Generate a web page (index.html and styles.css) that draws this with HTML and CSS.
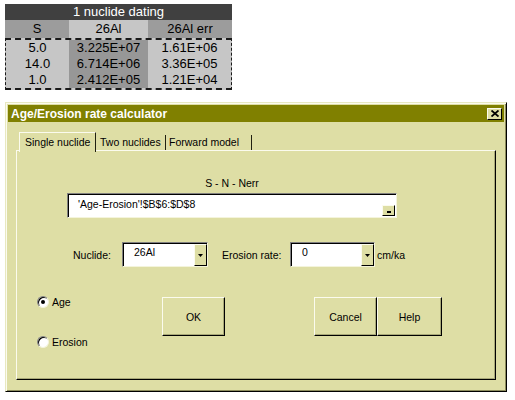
FILE: index.html
```html
<!DOCTYPE html>
<html>
<head>
<meta charset="utf-8">
<link rel="stylesheet" href="styles.css">
</head>
<body>
<div class="sheet">
  <div class="sheet-title">1 nuclide dating</div>
  <div class="sheet-row sheet-head">
    <div class="cell dark">S</div>
    <div class="cell light">26Al</div>
    <div class="cell dark">26Al err</div>
  </div>
  <div class="sheet-body">
    <div class="sheet-row"><div class="cell light">5.0</div><div class="cell mid">3.225E+07</div><div class="cell light">1.61E+06</div></div>
    <div class="sheet-row"><div class="cell light">14.0</div><div class="cell mid">6.714E+06</div><div class="cell light">3.36E+05</div></div>
    <div class="sheet-row"><div class="cell light">1.0</div><div class="cell mid">2.412E+05</div><div class="cell light">1.21E+04</div></div>
  </div>
</div>

<div class="dialog">
  <div class="titlebar">
    <span class="title">Age/Erosion rate calculator</span>
    <span class="close"><svg width="8" height="7" viewBox="0 0 8 7"><path d="M0.5 0.5 L7.5 6.5 M7.5 0.5 L0.5 6.5" stroke="#000" stroke-width="1.8"/></svg></span>
  </div>
  <div class="tabs">
    <div class="tab tab-active">Single nuclide</div>
    <div class="tab tab-two">Two nuclides</div>
    <div class="tab tab-fwd">Forward model</div>
  </div>
  <div class="panel">
    <div class="range-label">S - N - Nerr</div>
    <div class="field">
      <span class="field-text">'Age-Erosion'!$B$6:$D$8</span>
      <span class="field-btn"><span class="dash"></span></span>
    </div>
    <div class="params">
      <span class="lbl lbl-nuc">Nuclide:</span>
      <div class="combo combo-nuc"><span class="combo-text">26Al</span><span class="drop"><svg width="5" height="3" viewBox="0 0 5 3"><path d="M0 0 H5 L2.5 3 Z" fill="#000"/></svg></span></div>
      <span class="lbl lbl-ero">Erosion rate:</span>
      <div class="combo combo-ero"><span class="combo-text">0</span><span class="drop"><svg width="5" height="3" viewBox="0 0 5 3"><path d="M0 0 H5 L2.5 3 Z" fill="#000"/></svg></span></div>
      <span class="unit">cm/ka</span>
    </div>
    <div class="actions">
      <div class="radios">
        <div class="radio"><span class="circle"><span class="dot"></span></span><span>Age</span></div>
        <div class="radio"><span class="circle"></span><span>Erosion</span></div>
      </div>
      <div class="btn btn-ok">OK</div>
      <div class="btn btn-cancel">Cancel</div>
      <div class="btn btn-help">Help</div>
    </div>
  </div>
</div>
</body>
</html>
```

FILE: styles.css
```css
body {
  margin: 0;
  background: #fff;
  font-family: "Liberation Sans", Arial, sans-serif;
  color: #000;
}

/* spreadsheet fragment */
.sheet {
  margin: 4px 0 0 5px;
  width: 227px;
  font-size: 13px;
}
.sheet-title {
  height: 16px;
  line-height: 16px;
  background: #404040;
  color: #fff;
  text-align: center;
}
.sheet-row {
  display: grid;
  grid-template-columns: 64px 79px 84px;
}
.sheet-head .cell {
  height: 18px;
  line-height: 18px;
}
.cell {
  text-align: center;
}
.dark { background: #9c9c9c; }
.light { background: #c6c6c6; }
.mid { background: #979797; }
.sheet-body {
  box-sizing: border-box;
  width: 227px;
  border-top: 2px dashed #1a1a1a;
  border-bottom: 2px dashed #1a1a1a;
  border-left: 1px dashed #1a1a1a;
  border-right: 1px dashed #1a1a1a;
  background: #c6c6c6;
}
.sheet-body .sheet-row {
  grid-template-columns: 63px 79px 83px;
}
.sheet-body .cell {
  height: 16px;
  line-height: 16px;
}

/* dialog */
.dialog {
  margin: 12px 0 0 5px;
  width: 502px;
  height: 290px;
  box-sizing: border-box;
  background: #dedea5;
  border: 1px solid;
  border-color: #e8e8c0 #000 #000 #e8e8c0;
  box-shadow: inset 1px 1px #fbfbee, inset -1px -1px #8c8c5c;
  padding: 2px 2px;
  font-size: 10.5px;
}
.titlebar {
  height: 17px;
  background: #808000;
  color: #fff;
  display: flex;
  align-items: center;
  justify-content: space-between;
  padding: 0 2px 0 3px;
}
.title {
  font-weight: bold;
  font-size: 12px;
}
.close {
  width: 15px;
  height: 12px;
  box-sizing: border-box;
  background: #dedea5;
  border: 1px solid;
  border-color: #fbfbee #000 #000 #fbfbee;
  display: flex;
  align-items: center;
  justify-content: center;
}
.tabs {
  display: flex;
  align-items: flex-end;
  margin: 10px 0 0 11px;
  height: 18px;
  position: relative;
  z-index: 1;
}
.tab {
  box-sizing: border-box;
  height: 15px;
  line-height: 14px;
  border-left: 1px solid #fbfbee;
  border-right: 1px solid #202010;
  padding-left: 4px;
  white-space: nowrap;
}
.tab-active {
  width: 77px;
  height: 20px;
  line-height: 19px;
  margin-bottom: -2px;
  background: #dedea5;
  border-top: 1px solid #fbfbee;
  padding-left: 5px;
}
.tab-two { width: 70px; border-left: none; padding-left: 4px; }
.tab-fwd { width: 86px; border-left: none; padding-left: 3px; }

.panel {
  margin-left: 8px;
  width: 480px;
  height: 230px;
  box-sizing: border-box;
  border: 1px solid;
  border-color: #fbfbee #000 #000 #fbfbee;
  box-shadow: inset -1px -1px #a8a878;
  display: flex;
  flex-direction: column;
}
.range-label {
  margin: 26px 0 0 50px;
  width: 330px;
  text-align: center;
  height: 13px;
  line-height: 13px;
}
.field {
  margin: 3px 0 0 50px;
  width: 330px;
  height: 25px;
  box-sizing: border-box;
  background: #fff;
  border: 1px solid;
  border-color: #808080 #f4f4dc #f4f4dc #808080;
  box-shadow: inset 1px 1px #000;
  display: flex;
  justify-content: space-between;
  align-items: flex-end;
  padding: 0 1px 1px 0;
}
.field-text {
  align-self: flex-start;
  padding: 4px 0 0 10px;
}
.field-btn {
  width: 13px;
  height: 11px;
  box-sizing: border-box;
  background: #dedea5;
  border: 1px solid;
  border-color: #fbfbee #000 #000 #fbfbee;
  display: flex;
  justify-content: center;
  align-items: flex-end;
  padding-bottom: 2px;
}
.dash {
  width: 4px;
  height: 2px;
  background: #000;
}
.params {
  margin: 24px 0 0 56px;
  height: 25px;
  display: flex;
  align-items: center;
}
.lbl-nuc { width: 49px; }
.lbl-ero { width: 68px; margin-left: 14px; }
.combo {
  height: 25px;
  box-sizing: border-box;
  background: #fff;
  border: 1px solid;
  border-color: #808080 #f4f4dc #f4f4dc #808080;
  box-shadow: inset 1px 1px #000;
  display: flex;
  justify-content: space-between;
  padding: 1px 0 0 1px;
}
.combo-nuc { width: 86px; }
.combo-ero { width: 85px; }
.combo-text { padding: 2px 0 0 10px; }
.drop {
  width: 13px;
  box-sizing: border-box;
  background: #dedea5;
  border: 1px solid;
  border-color: #fbfbee #000 #000 #fbfbee;
  display: flex;
  align-items: center;
  justify-content: center;
}
.unit { margin-left: 2px; }

.actions {
  margin: 30px 0 0 20px;
  display: flex;
  align-items: flex-start;
}
.radios {
  width: 125px;
  margin-top: -2px;
  display: flex;
  flex-direction: column;
  gap: 27px;
}
.radio {
  display: flex;
  align-items: center;
  gap: 3px;
  height: 13px;
}
.circle {
  width: 12px;
  height: 12px;
  box-sizing: border-box;
  border-radius: 50%;
  background: #fff;
  border: 1px solid;
  border-color: #808080 #f4f4dc #f4f4dc #808080;
  box-shadow: inset 1px 1px #000;
  display: flex;
  align-items: center;
  justify-content: center;
}
.dot {
  width: 4px;
  height: 4px;
  border-radius: 50%;
  background: #000;
}
.btn {
  height: 39px;
  box-sizing: border-box;
  border: 1px solid;
  border-color: #fbfbee #000 #000 #fbfbee;
  box-shadow: inset -1px -1px #a8a878;
  display: flex;
  align-items: center;
  justify-content: center;
}
.btn-ok { width: 63px; }
.btn-cancel { width: 63px; margin-left: 89px; }
.btn-help { width: 65px; }
```
